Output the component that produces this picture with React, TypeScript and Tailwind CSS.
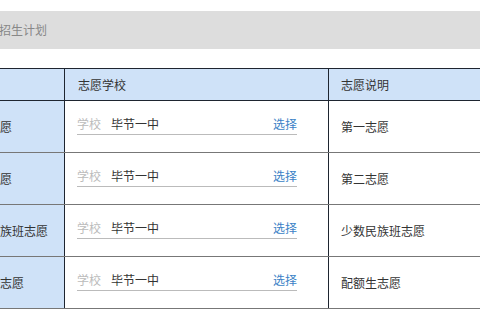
const ROWS = [
  { type: "第一志愿", school: "毕节一中", note: "第一志愿" },
  { type: "第二志愿", school: "毕节一中", note: "第二志愿" },
  { type: "少数民族班志愿", school: "毕节一中", note: "少数民族班志愿" },
  { type: "配额生志愿", school: "毕节一中", note: "配额生志愿" },
];

export default function App() {
  return (
    <div className="w-[480px] h-[320px] overflow-hidden bg-white text-xs text-[#333] font-['Noto_Sans_CJK_SC','Noto_Sans',sans-serif]">
      <div className="w-[600px] -ml-[48px] pt-[11px]">
        {/* title bar */}
        <div className="h-[38px] bg-[#dddddd] flex items-center pl-[47px] text-[#888]">招生计划</div>

        {/* volunteer table */}
        <div className="mt-[19px] border-t border-[#1e2530]">
          <div className="flex h-[32px] bg-[#cfe2f8] border-b border-[#1e2530]">
            <div className="w-[113px] border-r border-[#1e2530]" />
            <div className="w-[264px] border-r border-[#1e2530] flex items-center pl-[13px]">志愿学校</div>
            <div className="flex-1 flex items-center pl-[12px]">志愿说明</div>
          </div>
          {ROWS.map((row) => (
            <div key={row.type} className="flex h-[52px] border-b border-[#777]">
              <div className="w-[113px] bg-[#cfe2f8] border-r border-[#1e2530] flex items-center pl-[12px] whitespace-nowrap">
                {row.type}
              </div>
              <div className="w-[264px] border-r border-[#1e2530] pl-[12px] pt-[13px]">
                <div className="w-[220px] h-[21px] flex items-center border-b border-[#bbb]">
                  <span className="text-[#bbb]">学校</span>
                  <span className="ml-[10px]">{row.school}</span>
                  <span className="ml-auto text-[#3a7fc6]">选择</span>
                </div>
              </div>
              <div className="flex-1 flex items-center pl-[12px]">{row.note}</div>
            </div>
          ))}
        </div>
      </div>
    </div>
  );
}
